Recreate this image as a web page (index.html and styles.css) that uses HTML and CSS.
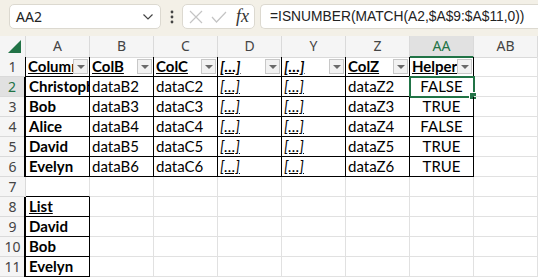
FILE: index.html
```html
<!DOCTYPE html>
<html lang="en">
<head>
    <meta charset="UTF-8">
    <title>Helper column</title>
    <link rel="stylesheet" href="styles.css">
</head>
<body>
    <div class="toolbar">
        <div class="namebox">
            <span>AA2</span>
            <svg width="12" height="8" viewBox="0 0 12 8"><path d="M1.5 1.5 L6 6 L10.5 1.5" fill="none" stroke="#444" stroke-width="1.2"/></svg>
        </div>
        <svg class="grip" width="4" height="14" viewBox="0 0 4 14"><circle cx="2" cy="2" r="1.4" fill="#444"/><circle cx="2" cy="7" r="1.4" fill="#444"/><circle cx="2" cy="12" r="1.4" fill="#444"/></svg>
        <div class="fxbox">
            <svg width="14" height="14" viewBox="0 0 14 14"><path d="M1 1 L13 13 M13 1 L1 13" stroke="#c4c4c4" stroke-width="1.2"/></svg>
            <svg width="16" height="12" viewBox="0 0 16 12"><path d="M1 6 L5.5 11 L15 1" fill="none" stroke="#c4c4c4" stroke-width="1.2"/></svg>
            <span class="fx">fx</span>
        </div>
        <div class="formula">=ISNUMBER(MATCH(A2,$A$9:$A$11,0))</div>
    </div>

    <div class="sheet">
        <div class="row head">
            <div class="corner"><svg width="13" height="13" viewBox="0 0 13 13"><path d="M13 0 L13 13 L0 13 Z" fill="#217346"/></svg></div>
            <div class="col">A</div><div class="col">B</div><div class="col">C</div><div class="col">D</div>
            <div class="col">Y</div><div class="col">Z</div><div class="col sel">AA</div><div class="col">AB</div>
        </div>
        <div class="row">
            <div class="num">1</div>
            <div class="cell t th"><span class="txt">Column</span><span class="dd"></span></div>
            <div class="cell t th"><span class="txt">ColB</span><span class="dd"></span></div>
            <div class="cell t th"><span class="txt">ColC</span><span class="dd"></span></div>
            <div class="cell t th"><span class="txt em">[…]</span><span class="dd"></span></div>
            <div class="cell t th"><span class="txt em">[…]</span><span class="dd"></span></div>
            <div class="cell t th"><span class="txt">ColZ</span><span class="dd"></span></div>
            <div class="cell t th"><span class="txt">Helper</span><span class="dd"></span></div>
            <div class="cell"></div>
        </div>
        <div class="row">
            <div class="num sel">2</div>
            <div class="cell t b">Christopher</div><div class="cell t">dataB2</div><div class="cell t">dataC2</div>
            <div class="cell t"><span class="em">[…]</span></div><div class="cell t"><span class="em">[…]</span></div>
            <div class="cell t">dataZ2</div>
            <div class="cell t c active">FALSE<span class="handle"></span></div>
            <div class="cell"></div>
        </div>
        <div class="row">
            <div class="num">3</div>
            <div class="cell t b">Bob</div><div class="cell t">dataB3</div><div class="cell t">dataC3</div>
            <div class="cell t"><span class="em">[…]</span></div><div class="cell t"><span class="em">[…]</span></div>
            <div class="cell t">dataZ3</div><div class="cell t c">TRUE</div><div class="cell"></div>
        </div>
        <div class="row">
            <div class="num">4</div>
            <div class="cell t b">Alice</div><div class="cell t">dataB4</div><div class="cell t">dataC4</div>
            <div class="cell t"><span class="em">[…]</span></div><div class="cell t"><span class="em">[…]</span></div>
            <div class="cell t">dataZ4</div><div class="cell t c">FALSE</div><div class="cell"></div>
        </div>
        <div class="row">
            <div class="num">5</div>
            <div class="cell t b">David</div><div class="cell t">dataB5</div><div class="cell t">dataC5</div>
            <div class="cell t"><span class="em">[…]</span></div><div class="cell t"><span class="em">[…]</span></div>
            <div class="cell t">dataZ5</div><div class="cell t c">TRUE</div><div class="cell"></div>
        </div>
        <div class="row">
            <div class="num">6</div>
            <div class="cell t b">Evelyn</div><div class="cell t">dataB6</div><div class="cell t">dataC6</div>
            <div class="cell t"><span class="em">[…]</span></div><div class="cell t"><span class="em">[…]</span></div>
            <div class="cell t">dataZ6</div><div class="cell t c">TRUE</div><div class="cell"></div>
        </div>
        <div class="row">
            <div class="num">7</div>
            <div class="cell above"></div><div class="cell"></div><div class="cell"></div><div class="cell"></div>
            <div class="cell"></div><div class="cell"></div><div class="cell"></div><div class="cell"></div>
        </div>
        <div class="row">
            <div class="num">8</div>
            <div class="cell t b"><span class="u">List</span></div><div class="cell"></div><div class="cell"></div><div class="cell"></div>
            <div class="cell"></div><div class="cell"></div><div class="cell"></div><div class="cell"></div>
        </div>
        <div class="row">
            <div class="num">9</div>
            <div class="cell t b">David</div><div class="cell"></div><div class="cell"></div><div class="cell"></div>
            <div class="cell"></div><div class="cell"></div><div class="cell"></div><div class="cell"></div>
        </div>
        <div class="row">
            <div class="num">10</div>
            <div class="cell t b">Bob</div><div class="cell"></div><div class="cell"></div><div class="cell"></div>
            <div class="cell"></div><div class="cell"></div><div class="cell"></div><div class="cell"></div>
        </div>
        <div class="row">
            <div class="num">11</div>
            <div class="cell t b">Evelyn</div><div class="cell"></div><div class="cell"></div><div class="cell"></div>
            <div class="cell"></div><div class="cell"></div><div class="cell"></div><div class="cell"></div>
        </div>
    </div>
</body>
</html>
```

FILE: styles.css
```css
body {
    margin: 0;
    width: 538px;
    height: 277px;
    overflow: hidden;
    background: #fff;
    font-family: "Noto Sans", sans-serif;
}
.toolbar {
    height: 36px;
    background-color: #f3f0e7;
    display: flex;
    align-items: flex-start;
    padding: 4px 0 0 9px;
    box-sizing: border-box;
}
.namebox {
    width: 152px;
    height: 25px;
    box-sizing: border-box;
    background: #fff;
    border: 1px solid #dcd9d0;
    border-radius: 5px;
    display: flex;
    align-items: center;
    justify-content: space-between;
    padding: 0 6px 0 6px;
    font-size: 14px;
    color: #222;
}
.grip {
    margin: 6px 8px 0 9px;
}
.fxbox {
    width: 73px;
    height: 25px;
    box-sizing: border-box;
    background: #fff;
    border: 1px solid #dcd9d0;
    border-radius: 5px;
    display: flex;
    align-items: center;
    gap: 8px;
    padding-left: 6px;
}
.fx {
    font-family: "Liberation Serif", serif;
    font-style: italic;
    font-size: 18px;
    color: #333;
    margin-left: 1px;
}
.formula {
    flex: 1;
    height: 25px;
    box-sizing: border-box;
    margin-left: 5px;
    background: #fff;
    border: 1px solid #dcd9d0;
    border-right: none;
    border-radius: 5px 0 0 5px;
    padding-left: 9px;
    font-family: "Liberation Sans", sans-serif;
    font-size: 13.8px;
    line-height: 23px;
    color: #222;
    white-space: nowrap;
}
.sheet {
    font-family: "Lato", sans-serif;
}
.row {
    display: grid;
    grid-template-columns: 26px repeat(8, 64px);
    height: 20px;
}
.row.head {
    height: 21px;
}
.corner, .col, .num {
    background: #f5f5f5;
    color: #444;
    border-right: 1px solid #dadada;
    border-bottom: 1px solid #dadada;
    box-sizing: border-box;
    font-family: "Noto Sans", sans-serif;
    font-size: 14px;
}
.corner {
    display: flex;
    align-items: flex-end;
    justify-content: flex-end;
    padding: 0 4px 4px 0;
}
.col {
    text-align: center;
    line-height: 20px;
}
.col.sel {
    background: #e1e1e1;
    color: #217346;
    border-bottom: 2px solid #217346;
}
.num {
    text-align: center;
    line-height: 19px;
    font-size: 14px;
}
.num.sel {
    background: #e1e1e1;
    color: #217346;
    border-right: 2px solid #217346;
}
.cell {
    border-right: 1px solid #e1e1e1;
    border-bottom: 1px solid #e1e1e1;
    box-sizing: border-box;
    font-size: 15px;
    line-height: 19px;
    padding: 0 2px;
    color: #000;
    white-space: nowrap;
    overflow: hidden;
    position: relative;
}
.cell.t {
    border-right-color: #000;
    border-bottom-color: #000;
}
.cell.above {
    border-bottom-color: #000;
}
.row .num + .cell.t {
    box-shadow: -1px 0 0 #000;
    overflow: visible;
}
.row .num + .cell.t.b {
    overflow: hidden;
    border-left: 1px solid #000;
    margin-left: -1px;
    padding-left: 3px;
}
.b {
    font-weight: bold;
}
.c {
    text-align: center;
}
.em {
    font-style: italic;
    text-decoration: underline;
}
.u {
    text-decoration: underline;
}
.th {
    display: flex;
    align-items: center;
    font-weight: bold;
}
.th .txt {
    flex: 1;
    overflow: hidden;
    text-decoration: underline;
}
.th .dd {
    flex: none;
    width: 15px;
    height: 15px;
    box-sizing: border-box;
    border: 1px solid #c8c8c8;
    background: #f2f2f2;
    margin-right: -1px;
    position: relative;
}
.th .dd::after {
    content: "";
    position: absolute;
    left: 3px;
    top: 5px;
    border-left: 4px solid transparent;
    border-right: 4px solid transparent;
    border-top: 4px solid #6a6a6a;
}
.cell.active {
    overflow: visible;
    outline: 2px solid #217346;
    outline-offset: -1px;
}
.handle {
    position: absolute;
    right: -4px;
    bottom: -4px;
    width: 6px;
    height: 6px;
    background: #217346;
    border: 1px solid #fff;
}
```
